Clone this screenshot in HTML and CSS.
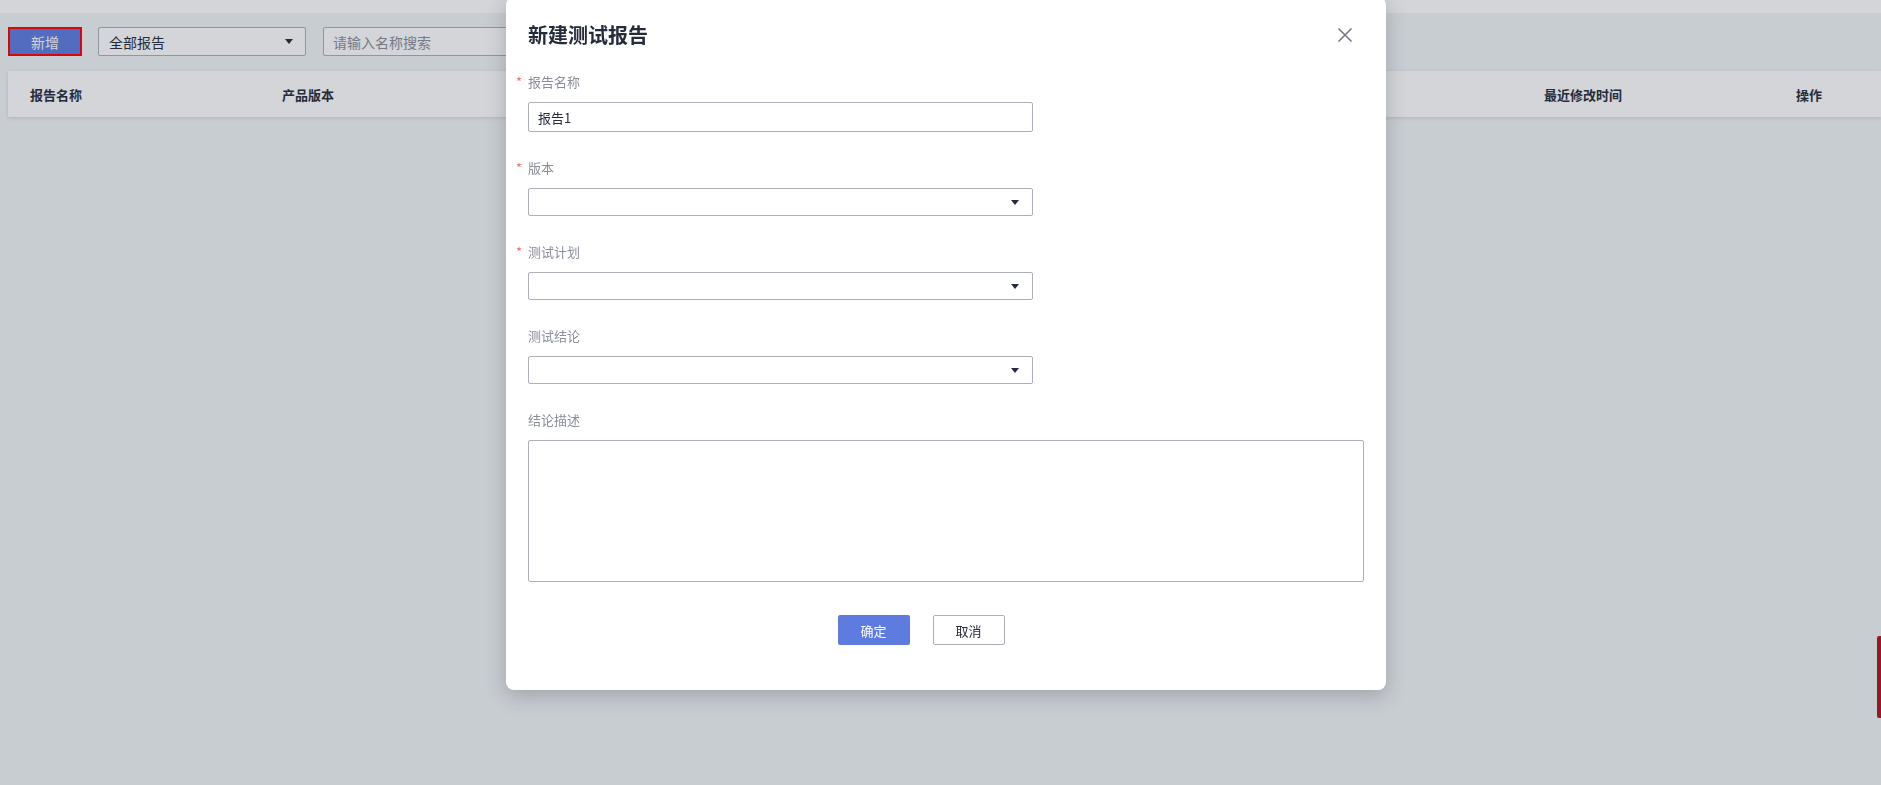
FILE: index.html
```html
<!DOCTYPE html>
<html lang="zh-CN">
<head>
    <meta charset="UTF-8">
    <title>测试报告</title>
    <link rel="stylesheet" href="styles.css">
</head>
<body>
    <div class="topBand"></div>

    <div class="page">
        <div class="toolbar">
            <button class="btnAdd" type="button">新增</button>
            <div class="filter">
                <span>全部报告</span>
                <i class="caret"></i>
            </div>
            <input class="search" type="text" placeholder="请输入名称搜索">
        </div>

        <div class="tableHead">
            <div class="col colName">报告名称</div>
            <div class="col colVersion">产品版本</div>
            <div class="col colTime">最近修改时间</div>
            <div class="col colOp">操作</div>
        </div>
    </div>

    <div class="sideTab"></div>

    <!-- dialog -->
    <div class="mask">
        <div class="modal">
            <div class="modalHead">
                <h2>新建测试报告</h2>
                <button class="close" type="button">
                    <svg width="16" height="16" viewBox="0 0 16 16">
                        <path d="M1.5 1.5 L14.5 14.5 M14.5 1.5 L1.5 14.5" stroke="#71757f" stroke-width="1.5" fill="none"/>
                    </svg>
                </button>
            </div>

            <form class="form">
                <div class="item">
                    <label class="required">报告名称</label>
                    <input class="field" type="text" value="报告1">
                </div>
                <div class="item">
                    <label class="required">版本</label>
                    <div class="select"><i class="caret"></i></div>
                </div>
                <div class="item">
                    <label class="required">测试计划</label>
                    <div class="select"><i class="caret"></i></div>
                </div>
                <div class="item">
                    <label>测试结论</label>
                    <div class="select"><i class="caret"></i></div>
                </div>
                <div class="item">
                    <label>结论描述</label>
                    <textarea class="area"></textarea>
                </div>
            </form>

            <div class="modalFoot">
                <button class="btnOk" type="button">确定</button>
                <button class="btnCancel" type="button">取消</button>
            </div>
        </div>
    </div>
</body>
</html>
```

FILE: styles.css
```css
* {
    margin: 0;
    padding: 0;
    box-sizing: border-box;
}

html, body {
    height: 100%;
}

body {
    background-color: #f2f5f7;
    color: #252b3a;
    font-family: "Noto Sans CJK SC", "Noto Sans", sans-serif;
    font-size: 13px;
    overflow: hidden;
}

button, input, textarea {
    font-family: inherit;
    font-size: 13px;
}

.topBand {
    height: 13px;
    background-color: #fff;
}

.page {
    padding-left: 8px;
}

/* toolbar */
.toolbar {
    display: flex;
    align-items: center;
    padding-top: 14px;
    height: 43px;
}

.btnAdd {
    width: 74px;
    height: 29px;
    background-color: #5e7ce0;
    color: #fff;
    border: 2px solid #ff0000;
    font-size: 14px;
}

.filter {
    width: 208px;
    height: 29px;
    margin-left: 16px;
    padding: 0 12px 0 10px;
    background-color: #fff;
    border: 1px solid #adb0b8;
    border-radius: 2px;
    display: flex;
    align-items: center;
    justify-content: space-between;
    font-size: 14px;
}

.search {
    width: 240px;
    height: 29px;
    margin-left: 17px;
    padding: 0 9px;
    border: 1px solid #adb0b8;
    border-radius: 2px;
    font-size: 14px;
    outline: none;
}

.search::placeholder {
    color: #8a8e99;
}

.caret {
    width: 0;
    height: 0;
    border-left: 4px solid transparent;
    border-right: 4px solid transparent;
    border-top: 5px solid #252b3a;
}

/* table header */
.tableHead {
    margin-top: 15px;
    height: 46px;
    background-color: #fff;
    box-shadow: 0 1px 4px rgba(0,0,0,0.12);
    display: grid;
    grid-template-columns: 252px 1262px 252px auto;
    align-items: center;
    padding-left: 22px;
    font-weight: bold;
}

.sideTab {
    position: fixed;
    right: 0;
    top: 636px;
    width: 4px;
    height: 82px;
    background-color: #c8091a;
    border-radius: 2px 0 0 2px;
}

/* dialog */
.mask {
    position: fixed;
    inset: 0;
    background-color: rgba(37,43,58,0.2);
}

.modal {
    position: absolute;
    left: 506px;
    top: -3px;
    width: 880px;
    padding: 3px 22px 45px 22px;
    background-color: #fff;
    border-radius: 8px;
    box-shadow: 0 6px 20px rgba(37,43,58,0.25);
}

.modalHead {
    display: flex;
    align-items: center;
    justify-content: space-between;
    height: 72px;
    padding-bottom: 2px;
}

.modalHead h2 {
    font-size: 20px;
    font-weight: bold;
    line-height: 28px;
}

.close {
    width: 16px;
    height: 16px;
    margin-right: 11px;
    background: none;
    border: none;
    display: flex;
}

.item {
    display: flex;
    flex-direction: column;
    margin-bottom: 26px;
}

.item label {
    position: relative;
    line-height: 20px;
    margin-bottom: 10px;
    color: #8a8e99;
}

.item label.required:before {
    content: "*";
    position: absolute;
    left: -12px;
    top: 0;
    color: #f66f6a;
    font-size: 13px;
}

.field {
    width: 505px;
    height: 30px;
    padding: 0 9px;
    border: 1px solid #adb0b8;
    border-radius: 2px;
    color: #252b3a;
    outline: none;
}

.select {
    width: 505px;
    height: 28px;
    border: 1px solid #adb0b8;
    border-radius: 2px;
    display: flex;
    align-items: center;
    justify-content: flex-end;
    padding-right: 13px;
}

.area {
    width: 836px;
    height: 142px;
    border: 1px solid #adb0b8;
    border-radius: 2px;
    resize: none;
    outline: none;
}

.form .item:last-child {
    margin-bottom: 33px;
}

.modalFoot {
    display: flex;
    justify-content: center;
    gap: 23px;
    padding-right: 50px;
}

.btnOk, .btnCancel {
    width: 72px;
    height: 30px;
    border-radius: 2px;
}

.btnOk {
    background-color: #5e7ce0;
    border: none;
    color: #fff;
}

.btnCancel {
    background-color: #fff;
    border: 1px solid #adb0b8;
    color: #252b3a;
}
```
